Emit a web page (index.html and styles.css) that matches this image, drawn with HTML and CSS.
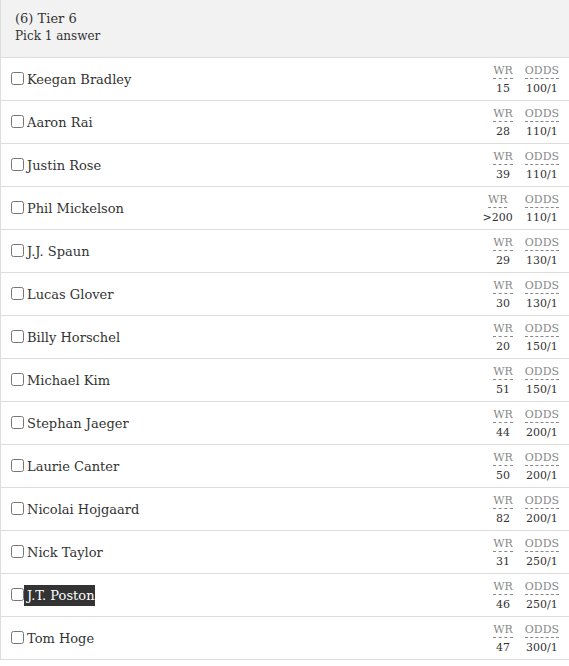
FILE: index.html
```html
<!DOCTYPE html>
<html>
<head>
<meta charset="utf-8">
<link rel="stylesheet" href="styles.css">
</head>
<body>
<div class="question">
  <div class="qhead">
    <div class="qtitle">(6) Tier 6</div>
    <div class="qsub">Pick 1 answer</div>
  </div>
  <div class="opts">
    <label class="opt"><span class="left"><input type="checkbox"><span class="name">Keegan Bradley</span></span><span class="stats"><span class="stat"><abbr>WR</abbr><span class="val">15</span></span><span class="stat"><abbr>ODDS</abbr><span class="val">100/1</span></span></span></label>
    <label class="opt"><span class="left"><input type="checkbox"><span class="name">Aaron Rai</span></span><span class="stats"><span class="stat"><abbr>WR</abbr><span class="val">28</span></span><span class="stat"><abbr>ODDS</abbr><span class="val">110/1</span></span></span></label>
    <label class="opt"><span class="left"><input type="checkbox"><span class="name">Justin Rose</span></span><span class="stats"><span class="stat"><abbr>WR</abbr><span class="val">39</span></span><span class="stat"><abbr>ODDS</abbr><span class="val">110/1</span></span></span></label>
    <label class="opt"><span class="left"><input type="checkbox"><span class="name">Phil Mickelson</span></span><span class="stats"><span class="stat"><abbr>WR</abbr><span class="val">&gt;200</span></span><span class="stat"><abbr>ODDS</abbr><span class="val">110/1</span></span></span></label>
    <label class="opt"><span class="left"><input type="checkbox"><span class="name">J.J. Spaun</span></span><span class="stats"><span class="stat"><abbr>WR</abbr><span class="val">29</span></span><span class="stat"><abbr>ODDS</abbr><span class="val">130/1</span></span></span></label>
    <label class="opt"><span class="left"><input type="checkbox"><span class="name">Lucas Glover</span></span><span class="stats"><span class="stat"><abbr>WR</abbr><span class="val">30</span></span><span class="stat"><abbr>ODDS</abbr><span class="val">130/1</span></span></span></label>
    <label class="opt"><span class="left"><input type="checkbox"><span class="name">Billy Horschel</span></span><span class="stats"><span class="stat"><abbr>WR</abbr><span class="val">20</span></span><span class="stat"><abbr>ODDS</abbr><span class="val">150/1</span></span></span></label>
    <label class="opt"><span class="left"><input type="checkbox"><span class="name">Michael Kim</span></span><span class="stats"><span class="stat"><abbr>WR</abbr><span class="val">51</span></span><span class="stat"><abbr>ODDS</abbr><span class="val">150/1</span></span></span></label>
    <label class="opt"><span class="left"><input type="checkbox"><span class="name">Stephan Jaeger</span></span><span class="stats"><span class="stat"><abbr>WR</abbr><span class="val">44</span></span><span class="stat"><abbr>ODDS</abbr><span class="val">200/1</span></span></span></label>
    <label class="opt"><span class="left"><input type="checkbox"><span class="name">Laurie Canter</span></span><span class="stats"><span class="stat"><abbr>WR</abbr><span class="val">50</span></span><span class="stat"><abbr>ODDS</abbr><span class="val">200/1</span></span></span></label>
    <label class="opt"><span class="left"><input type="checkbox"><span class="name">Nicolai Hojgaard</span></span><span class="stats"><span class="stat"><abbr>WR</abbr><span class="val">82</span></span><span class="stat"><abbr>ODDS</abbr><span class="val">200/1</span></span></span></label>
    <label class="opt"><span class="left"><input type="checkbox"><span class="name">Nick Taylor</span></span><span class="stats"><span class="stat"><abbr>WR</abbr><span class="val">31</span></span><span class="stat"><abbr>ODDS</abbr><span class="val">250/1</span></span></span></label>
    <label class="opt"><span class="left"><input type="checkbox"><span class="name selected">J.T. Poston</span></span><span class="stats"><span class="stat"><abbr>WR</abbr><span class="val">46</span></span><span class="stat"><abbr>ODDS</abbr><span class="val">250/1</span></span></span></label>
    <label class="opt"><span class="left"><input type="checkbox"><span class="name">Tom Hoge</span></span><span class="stats"><span class="stat"><abbr>WR</abbr><span class="val">47</span></span><span class="stat"><abbr>ODDS</abbr><span class="val">300/1</span></span></span></label>
  </div>
</div>
</body>
</html>
```

FILE: styles.css
```css
html, body {
  margin: 0;
  padding: 0;
  background: #fff;
}
body {
  font-family: "DejaVu Serif", serif;
  color: #333;
}
.question {
  border-left: 1px solid #ddd;
  width: 568px;
}
.qhead {
  background: #f2f2f2;
  padding: 10px 14px 0;
  height: 47px;
  border-bottom: 1px solid #ddd;
}
.qtitle {
  font-size: 13px;
  line-height: 17px;
}
.qsub {
  font-size: 12px;
  line-height: 19px;
}
.opt {
  display: flex;
  justify-content: space-between;
  align-items: center;
  height: 42px;
  border-bottom: 1px solid #ddd;
  padding: 0 10px 0 6px;
}
.left {
  display: flex;
  align-items: center;
  margin-top: 1px;
}
.left input {
  margin: 0 0 0 4px;
  width: 13px;
  height: 13px;
  position: relative;
  top: -1px;
}
.name {
  font-size: 13px;
  line-height: 21px;
  padding-left: 3px;
  color: #333;
}
.name.selected {
  background: #333;
  color: #fff;
}
.stats {
  display: flex;
  gap: 12px;
  margin-top: 1px;
}
.stat {
  display: flex;
  flex-direction: column;
  align-items: center;
  font-size: 11px;
}
.stat abbr {
  color: #888;
  text-decoration: none;
  border-bottom: 1px dashed #888;
  line-height: 14px;
  margin-bottom: 2px;
}
.stat .val {
  color: #333;
  line-height: 15px;
}
```
